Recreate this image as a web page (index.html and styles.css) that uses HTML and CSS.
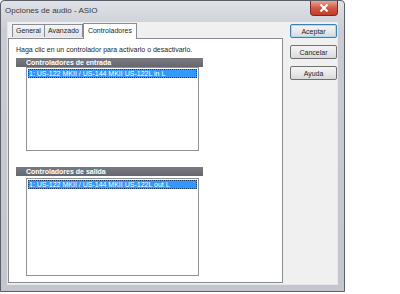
FILE: index.html
```html
<!DOCTYPE html>
<html lang="es">
<head>
    <meta charset="UTF-8">
    <title>Opciones de audio - ASIO</title>
    <link rel="stylesheet" href="styles.css">
</head>
<body>
    <div class="window">
        <div class="titlebar">
            <span class="title">Opciones de audio - ASIO</span>
            <span class="close">
                <svg width="10" height="8" viewBox="0 0 10 8"><path d="M1.5 0.5 L8.5 7.5 M8.5 0.5 L1.5 7.5" stroke="#fff" stroke-width="2"/></svg>
            </span>
        </div>
        <div class="client">
            <div class="sheet">
                <div class="tabs">
                    <span class="tab">General</span>
                    <span class="tab">Avanzado</span>
                    <span class="tab active">Controladores</span>
                </div>
                <div class="panel">
                    <p class="hint">Haga clic en un controlador para activarlo o desactivarlo.</p>
                    <div class="group">
                        <div class="group-title">Controladores de entrada</div>
                        <div class="list list-in">
                            <div class="item selected">1: US-122 MKII / US-144 MKII US-122L in L</div>
                        </div>
                    </div>
                    <div class="group group-out">
                        <div class="group-title">Controladores de salida</div>
                        <div class="list list-out">
                            <div class="item selected">1: US-122 MKII / US-144 MKII US-122L out L</div>
                        </div>
                    </div>
                </div>
            </div>
            <div class="buttons">
                <button class="btn default">Aceptar</button>
                <button class="btn">Cancelar</button>
                <button class="btn">Ayuda</button>
            </div>
        </div>
    </div>
</body>
</html>
```

FILE: styles.css
```css
body {
    margin: 0;
    background: #fff;
    font-family: 'Liberation Sans', Arial, sans-serif;
    font-size: 7px;
    color: #1e1e1e;
}
.window {
    box-sizing: border-box;
    width: 345px;
    height: 292px;
    border: 1px solid #5b5f67;
    border-radius: 4px 4px 0 0;
    background: linear-gradient(to bottom, #dfe2e7, #c9ccd3 30px, #c3c6cc);
    display: flex;
    flex-direction: column;
}
.titlebar {
    height: 21px;
    display: flex;
    align-items: flex-start;
}
.title {
    font-size: 8px;
    color: #3a3a3a;
    padding: 5px 0 0 4px;
}
.close {
    margin-left: auto;
    margin-right: 6px;
    width: 28px;
    height: 15px;
    box-sizing: border-box;
    border: 1px solid #7a2a22;
    border-top: none;
    border-radius: 0 0 4px 4px;
    background: linear-gradient(to bottom, #e9a697, #d05a46 50%, #c23b28);
    display: flex;
    align-items: center;
    justify-content: center;
}
.client {
    flex: 1;
    margin: 0 6px 6px 6px;
    background: #f0f0f0;
    border: 1px solid #e6e7ea;
    border-top: none;
    display: flex;
    padding: 1px 0 0 0;
}
.sheet {
    width: 276px;
    display: flex;
    flex-direction: column;
}
.tabs {
    display: flex;
    align-items: flex-end;
    height: 15px;
    padding-left: 4px;
}
.tab {
    box-sizing: border-box;
    height: 13px;
    padding: 2px 3px 0 3px;
    border: 1px solid #898c95;
    border-bottom: none;
    background: linear-gradient(to bottom, #f5f5f5, #e2e2e2);
    margin-bottom: 1px;
    white-space: nowrap;
}
.tab + .tab {
    border-left: none;
}
.tab.active {
    height: 16px;
    padding: 3px 4px 0 4px;
    margin-bottom: -1px;
    background: #fff;
    position: relative;
    z-index: 1;
    border-left: 1px solid #898c95;
}
.panel {
    flex: 1;
    margin-bottom: 1px;
    background: #fff;
    border: 1px solid #898c95;
    padding: 6px 0 0 7px;
}
.hint {
    margin: 0;
    line-height: 10px;
}
.group {
    margin-top: 3px;
}
.group-out {
    margin-top: 16px;
}
.group-title {
    width: 177px;
    height: 9px;
    line-height: 9px;
    padding-left: 10px;
    background: linear-gradient(to bottom, #7a7b82, #66676e);
    color: #fff;
    font-weight: bold;
}
.list {
    box-sizing: border-box;
    width: 173px;
    margin-left: 10px;
    border: 1px solid #8f9299;
    background: #fff;
    padding: 1px;
}
.list-in {
    height: 84px;
}
.list-out {
    height: 98px;
    margin-top: 2px;
}
.item {
    height: 9px;
    line-height: 9px;
    padding-left: 1px;
    white-space: nowrap;
}
.item.selected {
    background: #3399ff;
    color: #fff;
    outline: 1px dotted #1b3a66;
    outline-offset: -1px;
}
.buttons {
    display: flex;
    flex-direction: column;
    gap: 7px;
    margin: 1px 0 0 7px;
}
.btn {
    box-sizing: border-box;
    width: 47px;
    height: 14px;
    padding: 0;
    font-family: 'Liberation Sans', Arial, sans-serif;
    font-size: 7px;
    color: #1e1e1e;
    border: 1px solid #707070;
    border-radius: 2px;
    background: linear-gradient(to bottom, #f4f4f4, #e9e9e9 50%, #d9d9d9);
}
.btn.default {
    border-color: #3c7fb1;
    box-shadow: inset 0 0 0 1px #a9dcf2;
}
```
